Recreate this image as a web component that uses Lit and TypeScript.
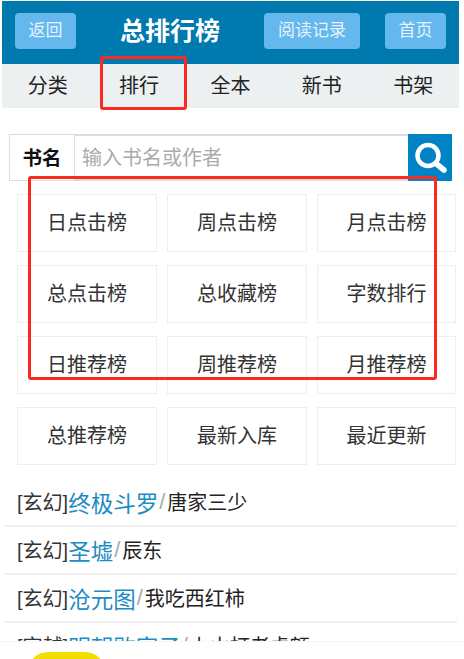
import { LitElement, html, css } from "lit";
import { customElement } from "lit/decorators.js";

const grid = ["日点击榜","周点击榜","月点击榜","总点击榜","总收藏榜","字数排行","日推荐榜","周推荐榜","月推荐榜","总推荐榜","最新入库","最近更新"];
const list = [
  ["[玄幻]","终极斗罗","唐家三少"],
  ["[玄幻]","圣墟","辰东"],
  ["[玄幻]","沧元图","我吃西红柿"],
  ["[穿越]","明朝败家子","上山打老虎额"],
];

@customElement("app-root")
export class AppRoot extends LitElement {
  static styles = css`
    :host { display: block; width: 464px; height: 659px; overflow: hidden; position: relative; background: #fff;
      font-family: "Liberation Sans", "Noto Sans CJK SC", sans-serif; color: #222; }
    .page { padding: 1px 0 0 2px; width: 459px; box-sizing: border-box; height: 659px; overflow: hidden; display: flex; flex-direction: column; }
    .head { height: 63px; background: #0079ae; display: flex; align-items: flex-start; padding: 12px 0 0 13px; box-sizing: border-box; flex: none; }
    .btn { height: 36px; padding-bottom: 6px; box-sizing: border-box; background: #64b8ee; color: #e6f3fb; border-radius: 4px; font-size: 17px; display: flex; align-items: center; justify-content: center; flex: none; }
    .b1 { width: 61px; }
    .b2 { width: 96px; }
    .b3 { width: 61px; margin-left: 25px; }
    .title { width: 188px; height: 36px; line-height: 36px; color: #fff; font-size: 25px; font-weight: 700; text-align: center; flex: none; }
    .nav { height: 44px; padding-bottom: 3px; box-sizing: border-box; background: #ecf0f1; display: grid; grid-template-columns: repeat(5, 91.4px); align-items: center; justify-items: center; font-size: 20px; color: #222; flex: none; }
    .search { display: flex; height: 47px; width: 443px; margin: 26px 0 0 7px; flex: none; }
    .label { width: 66px; box-sizing: border-box; border: 1px solid #ddd; padding-bottom: 2px; background: #fff; font-size: 19.5px; font-weight: 700; color: #111; display: flex; align-items: center; justify-content: center; }
    .input { flex: 1; box-sizing: border-box; border: solid #ddd; border-width: 2px 0 2px 0; padding-bottom: 2px; color: #aaa; font-size: 20px; display: flex; align-items: center; padding-left: 7px; }
    .go { width: 44px; background: #0083c4; display: flex; align-items: center; justify-content: center; }
    .grid { display: grid; grid-template-columns: 140px 140px 139px; column-gap: 10px; row-gap: 14px; margin: 13px 0 0 15px; flex: none; }
    .cell { height: 58px; margin-bottom: -1px; box-sizing: border-box; border: 1px solid #eee; padding-bottom: 3px; display: flex; align-items: center; justify-content: center; font-size: 20px; color: #333; }
    .list { margin: 15px 0 0 2px; flex: none; width: 453px; }
    .row { height: 48px; box-sizing: border-box; border-bottom: 2px solid #f0f0f0; padding-left: 13px; padding-bottom: 1px; display: flex; align-items: center; font-size: 20px; color: #333; white-space: nowrap; }
    .row a { color: #1c8cc4; font-size: 22.5px; }
    .row i { color: #aaa; font-style: normal; font-size: 22px; margin: 0 2px 0 1px; }
    .row b { color: #222; font-weight: 400; }
    .red { position: absolute; border: 3px solid #fb2a20; border-radius: 3px; box-sizing: border-box; pointer-events: none; }
    .r1 { left: 100px; top: 56px; width: 87px; height: 54px; }
    .r2 { left: 28px; top: 176px; width: 409px; height: 204px; }
    .foot { position: absolute; left: 0; right: 0; bottom: 0; height: 18px; background: #fff; border-top: 1px solid #f6f6f6; box-sizing: border-box; overflow: hidden; }
    .pill { position: absolute; left: 28px; top: 10px; width: 77px; height: 40px; border-radius: 20px; background: #f2dd00; }
  `;
  render() {
    return html`<div class="page">
      <div class="head">
        <div class="btn b1">返回</div>
        <div class="title">总排行榜</div>
        <div class="btn b2">阅读记录</div>
        <div class="btn b3">首页</div>
      </div>
      <div class="nav"><span>分类</span><span>排行</span><span>全本</span><span>新书</span><span>书架</span></div>
      <div class="search">
        <div class="label">书名</div>
        <div class="input">输入书名或作者</div>
        <div class="go"><svg width="34" height="34" viewBox="0 0 34 34"><circle cx="15" cy="14.5" r="10.5" fill="none" stroke="#fff" stroke-width="4.5"/><path d="M23 22.5l8 6.5" stroke="#fff" stroke-width="5.5" stroke-linecap="round"/></svg></div>
      </div>
      <div class="grid">${grid.map((g) => html`<div class="cell">${g}</div>`)}</div>
      <div class="list">${list.map((l) => html`<div class="row">${l[0]}<a>${l[1]}</a><i>/</i><b>${l[2]}</b></div>`)}</div>
    </div>
    <div class="red r1"></div>
    <div class="red r2"></div>
    <div class="foot"><div class="pill"></div></div>`;
  }
}
